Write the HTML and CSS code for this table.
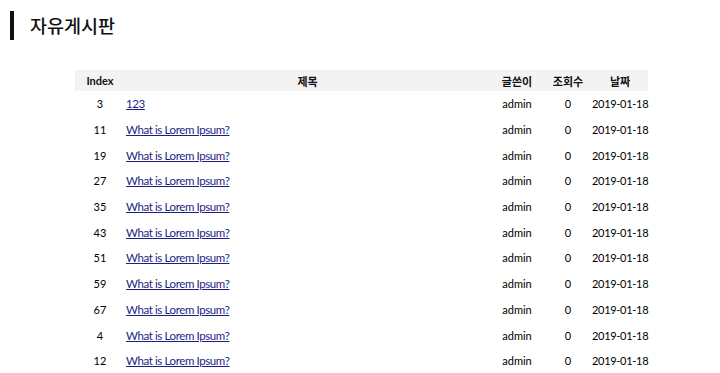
FILE: index.html
```html
<!DOCTYPE html>
<html lang="ko">
<head>
    <meta charset="utf-8" />
    <title>자유게시판</title>
    <link rel="stylesheet" href="styles.css">
</head>
<body>
    <h1 class="board-title">자유게시판</h1>

    <table class="board">
        <thead>
            <tr>
                <th class="col-index">Index</th>
                <th class="col-title">제목</th>
                <th class="col-writer">글쓴이</th>
                <th class="col-views">조회수</th>
                <th class="col-date">날짜</th>
            </tr>
        </thead>
        <tbody>
            <tr><td>3</td><td class="subject"><a href="#">123</a></td><td>admin</td><td>0</td><td>2019-01-18</td></tr>
            <tr><td>11</td><td class="subject"><a href="#">What is Lorem Ipsum?</a></td><td>admin</td><td>0</td><td>2019-01-18</td></tr>
            <tr><td>19</td><td class="subject"><a href="#">What is Lorem Ipsum?</a></td><td>admin</td><td>0</td><td>2019-01-18</td></tr>
            <tr><td>27</td><td class="subject"><a href="#">What is Lorem Ipsum?</a></td><td>admin</td><td>0</td><td>2019-01-18</td></tr>
            <tr><td>35</td><td class="subject"><a href="#">What is Lorem Ipsum?</a></td><td>admin</td><td>0</td><td>2019-01-18</td></tr>
            <tr><td>43</td><td class="subject"><a href="#">What is Lorem Ipsum?</a></td><td>admin</td><td>0</td><td>2019-01-18</td></tr>
            <tr><td>51</td><td class="subject"><a href="#">What is Lorem Ipsum?</a></td><td>admin</td><td>0</td><td>2019-01-18</td></tr>
            <tr><td>59</td><td class="subject"><a href="#">What is Lorem Ipsum?</a></td><td>admin</td><td>0</td><td>2019-01-18</td></tr>
            <tr><td>67</td><td class="subject"><a href="#">What is Lorem Ipsum?</a></td><td>admin</td><td>0</td><td>2019-01-18</td></tr>
            <tr><td>4</td><td class="subject"><a href="#">What is Lorem Ipsum?</a></td><td>admin</td><td>0</td><td>2019-01-18</td></tr>
            <tr><td>12</td><td class="subject"><a href="#">What is Lorem Ipsum?</a></td><td>admin</td><td>0</td><td>2019-01-18</td></tr>
        </tbody>
    </table>
</body>
</html>
```

FILE: styles.css
```css
body {
    margin: 0;
    font-family: Lato, "Noto Sans CJK KR", sans-serif;
    background-color: #fff;
    color: #111;
}

.board-title {
    margin: 11px 0 0 10px;
    padding-left: 16px;
    border-left: 4px solid #111;
    font-family: "Noto Sans CJK KR", sans-serif;
    font-size: 18.5px;
    font-weight: 500;
    line-height: 29px;
}

.board {
    width: 573px;
    margin: 30px 0 0 75px;
    border-collapse: collapse;
    table-layout: fixed;
    font-size: 11px;
}

.board th {
    height: 21px;
    padding: 0;
    background-color: #f3f3f3;
    font-weight: bold;
    text-align: center;
    white-space: nowrap;
}

.board td {
    height: 25.7px;
    padding: 0;
    text-align: center;
    white-space: nowrap;
    color: #000;
}

/* date column is tight, squeeze the digits a little */
.board td:last-child {
    letter-spacing: -0.3px;
}

.board td.subject {
    text-align: left;
    padding-left: 1px;
    font-size: 11.5px;
    letter-spacing: -0.4px;
}

.board a {
    color: #1d1d85;
}

.col-index { width: 50px; }
.col-writer { width: 54px; }
.col-views { width: 48px; }
.col-date { width: 56px; }
```
